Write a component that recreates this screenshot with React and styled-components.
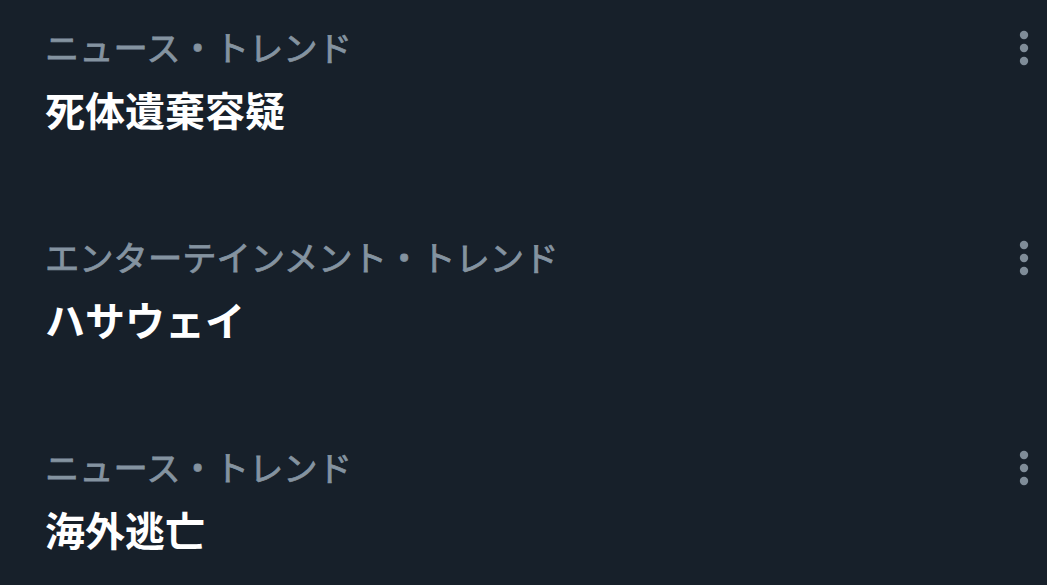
import React from 'react';
import styled, { createGlobalStyle } from 'styled-components';

const GlobalStyle = createGlobalStyle`
    html, body {
        margin: 0;
        padding: 0;
        background: #17202a;
    }

    body {
        font-family: "Noto Sans CJK JP", "Noto Sans", sans-serif;
    }
`

const trends = [
    { category: 'ニュース・トレンド', title: '死体遺棄容疑' },
    { category: 'エンターテインメント・トレンド', title: 'ハサウェイ' },
    { category: 'ニュース・トレンド', title: '海外逃亡' },
];

const MoreIcon = () => (
    <svg width="10" height="36" viewBox="0 0 10 36">
        <circle cx="5" cy="5" r="4.2" fill="currentColor" />
        <circle cx="5" cy="18" r="4.2" fill="currentColor" />
        <circle cx="5" cy="31" r="4.2" fill="currentColor" />
    </svg>
);

const TrendItem = ({ category, title }) => (
    <Item>
        <Texts>
            <Category>{category}</Category>
            <Title>{title}</Title>
        </Texts>
        <MoreButton aria-label="その他">
            <MoreIcon />
        </MoreButton>
    </Item>
);

export default function App() {
    return (
        <>
            <GlobalStyle />
            <List>
                {trends.map((t, i) => (
                    <TrendItem key={i} {...t} />
                ))}
            </List>
        </>
    );
}

const List = styled.div`
    width: 1047px;
    height: 585px;
    overflow: hidden;
    display: flex;
    flex-direction: column;
`

const Item = styled.div`
    display: flex;
    justify-content: space-between;
    align-items: flex-start;
    height: 210px;
    flex-shrink: 0;
    box-sizing: border-box;
    padding: 24px 18px 0 45px;
`

const Texts = styled.div`
    display: flex;
    flex-direction: column;
`

const Category = styled.span`
    font-size: 34.3px;
    line-height: 44px;
    color: #8493a0;
    font-weight: 400;
    -webkit-text-stroke: 0.8px #8493a0;
`

const Title = styled.span`
    margin-top: 15px;
    font-size: 40px;
    line-height: 52px;
    font-weight: 700;
    color: #ffffff;
`

const MoreButton = styled.div`
    display: flex;
    align-items: center;
    justify-content: center;
    margin-top: 6px;
    color: #7f8c98;
`
